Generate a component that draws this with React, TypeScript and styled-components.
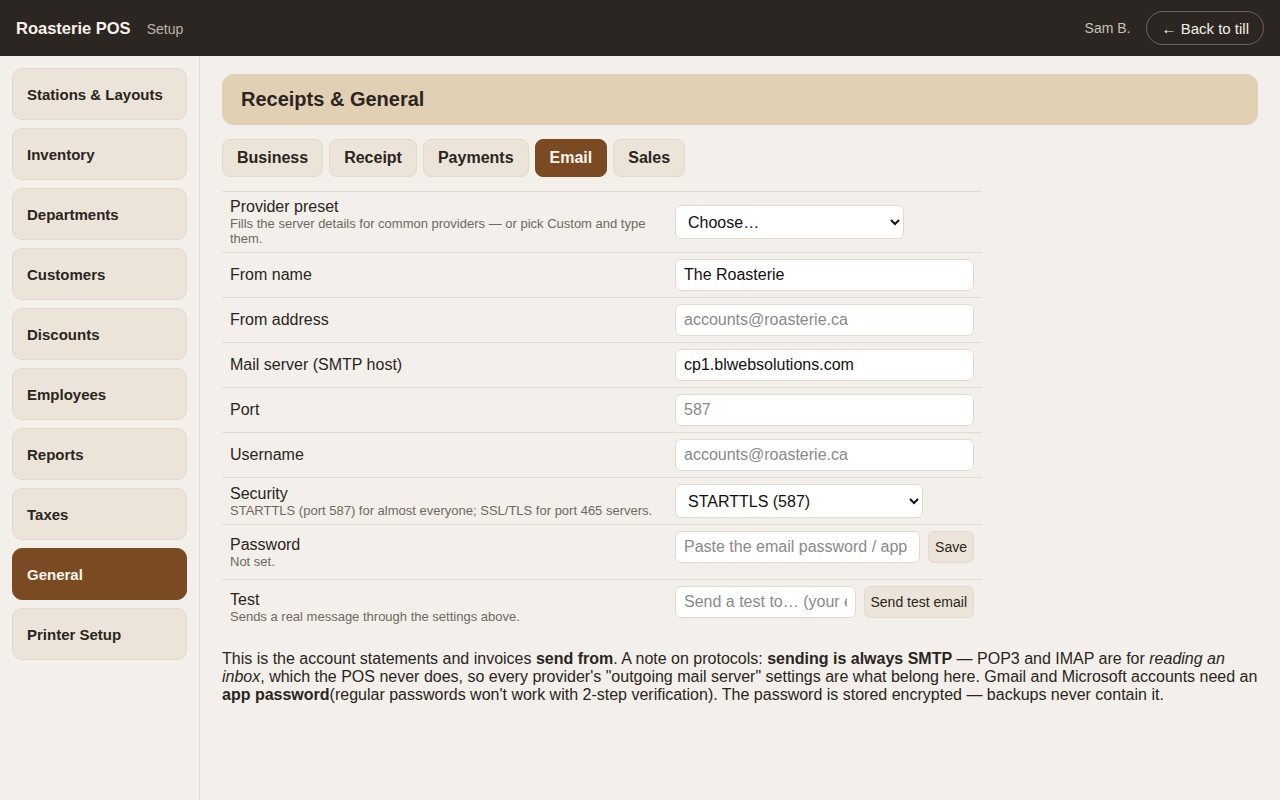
import React from "react";
import styled, { createGlobalStyle } from "styled-components";

const Global = createGlobalStyle`
  html, body { margin: 0; padding: 0; }
  body {
    font-family: "Liberation Sans", Arial, sans-serif;
    background: #f3f0eb;
    color: #2a2520;
  }
  * { box-sizing: border-box; }
`;

const Page = styled.div`
  display: flex;
  flex-direction: column;
  width: 1280px;
  height: 800px;
  overflow: hidden;
`;

const TopBar = styled.header`
  height: 56px;
  flex: none;
  background: #2b2621;
  display: flex;
  align-items: center;
  justify-content: space-between;
  padding: 0 16px;
`;

const Brand = styled.div`
  display: flex;
  align-items: baseline;
  gap: 16px;
`;

const BrandTitle = styled.span`
  color: #f6f1ea;
  font-weight: 700;
  font-size: 16.5px;
`;

const BrandSub = styled.span`
  color: #bdb4a8;
  font-size: 14px;
`;

const UserArea = styled.div`
  display: flex;
  align-items: center;
  gap: 16px;
`;

const UserName = styled.span`
  color: #c9c1b5;
  font-size: 14px;
`;

const BackButton = styled.button`
  height: 34px;
  padding: 0 14px;
  border-radius: 17px;
  border: 1px solid rgba(255, 255, 255, 0.28);
  background: transparent;
  color: #f3eee6;
  font-family: inherit;
  font-size: 15px;
`;

const Body = styled.div`
  flex: 1;
  display: flex;
  min-height: 0;
`;

const Sidebar = styled.nav`
  width: 200px;
  flex: none;
  border-right: 1px solid #e2dbd0;
  padding: 12px 12px;
  display: flex;
  flex-direction: column;
  gap: 8px;
`;

const NavItem = styled.div<{ $active?: boolean }>`
  height: 52px;
  display: flex;
  align-items: center;
  padding: 0 14px;
  border-radius: 10px;
  font-weight: 700;
  font-size: 15px;
  background: ${(p) => (p.$active ? "#7a4a22" : "#ece4d8")};
  color: ${(p) => (p.$active ? "#fbf6ef" : "#2a2520")};
  border: 1px solid ${(p) => (p.$active ? "#7a4a22" : "#e3d9cb")};
`;

const Main = styled.main`
  flex: 1;
  padding: 18px 22px;
  min-width: 0;
`;

const TitleCard = styled.div`
  height: 51px;
  background: #e2d0b5;
  border-radius: 12px;
  display: flex;
  align-items: center;
  padding: 0 19px;
  font-weight: 700;
  font-size: 20px;
  color: #2a2520;
`;

const Tabs = styled.div`
  display: flex;
  gap: 6px;
  margin-top: 14px;
  margin-bottom: 14px;
`;

const Tab = styled.div<{ $active?: boolean }>`
  height: 38px;
  display: flex;
  align-items: center;
  padding: 0 14px;
  border-radius: 8px;
  font-weight: 700;
  font-size: 16px;
  background: ${(p) => (p.$active ? "#7a4a22" : "#ece4d8")};
  color: ${(p) => (p.$active ? "#fbf6ef" : "#2a2520")};
  border: 1px solid ${(p) => (p.$active ? "#7a4a22" : "#e3d9cb")};
`;

const Table = styled.div`
  width: 760px;
`;

const Row = styled.div`
  display: grid;
  grid-template-columns: 445px 315px;
  align-items: center;
  border-top: 1px solid #e2dbd0;
`;

const LabelCell = styled.div`
  padding: 6px 8px;
`;

const Label = styled.div`
  font-size: 16px;
  line-height: 18px;
  color: #2a2520;
`;

const Hint = styled.div`
  font-size: 13px;
  line-height: 15px;
  color: #6f6860;
`;

const FieldCell = styled.div<{ $extra?: number }>`
  padding: 6px 8px ${(p) => 6 + (p.$extra || 0)}px 8px;
  display: flex;
  align-items: center;
  gap: 8px;
`;

const Input = styled.input<{ $w?: number }>`
  height: 32px;
  width: ${(p) => (p.$w ? `${p.$w}px` : "100%")};
  flex: ${(p) => (p.$w ? "none" : "1")};
  min-width: 0;
  border: 1px solid #e3dacd;
  border-radius: 6px;
  background: #fff;
  padding: 0 8px;
  font-family: inherit;
  font-size: 16px;
  color: #111;
  &::placeholder { color: #8a8a8a; }
`;

const Select = styled.select<{ $w: number }>`
  height: 34px;
  width: ${(p) => p.$w}px;
  border: 1px solid #e3dacd;
  border-radius: 6px;
  background: #fff;
  padding: 0 8px;
  font-family: inherit;
  font-size: 16px;
  color: #111;
`;

const SmallButton = styled.button`
  height: 32px;
  padding: 0 6px;
  flex: none;
  border: 1px solid #e3dacd;
  border-radius: 6px;
  background: #ece4d8;
  color: #2a2520;
  font-family: inherit;
  font-size: 14px;
`;

const Note = styled.p`
  margin: 16px 0 0;
  font-size: 16px;
  line-height: 18px;
  color: #2a2520;
`;

const nav = [
  "Stations & Layouts",
  "Inventory",
  "Departments",
  "Customers",
  "Discounts",
  "Employees",
  "Reports",
  "Taxes",
  "General",
  "Printer Setup",
];

const tabs = ["Business", "Receipt", "Payments", "Email", "Sales"];

export default function App() {
  return (
    <Page>
      <Global />
      <TopBar>
        <Brand>
          <BrandTitle>Roasterie POS</BrandTitle>
          <BrandSub>Setup</BrandSub>
        </Brand>
        <UserArea>
          <UserName>Sam B.</UserName>
          <BackButton>← Back to till</BackButton>
        </UserArea>
      </TopBar>
      <Body>
        <Sidebar>
          {nav.map((n) => (
            <NavItem key={n} $active={n === "General"}>
              {n}
            </NavItem>
          ))}
        </Sidebar>
        <Main>
          <TitleCard>Receipts &amp; General</TitleCard>
          <Tabs>
            {tabs.map((t) => (
              <Tab key={t} $active={t === "Email"}>
                {t}
              </Tab>
            ))}
          </Tabs>
          <Table>
            <Row>
              <LabelCell>
                <Label>Provider preset</Label>
                <Hint>Fills the server details for common providers — or pick Custom and type them.</Hint>
              </LabelCell>
              <FieldCell>
                <Select $w={229} defaultValue="">
                  <option value="">Choose…</option>
                  <option>Gmail</option>
                  <option>Microsoft 365</option>
                  <option>Custom</option>
                </Select>
              </FieldCell>
            </Row>
            <Row>
              <LabelCell><Label>From name</Label></LabelCell>
              <FieldCell><Input defaultValue="The Roasterie" /></FieldCell>
            </Row>
            <Row>
              <LabelCell><Label>From address</Label></LabelCell>
              <FieldCell><Input placeholder="accounts@roasterie.ca" /></FieldCell>
            </Row>
            <Row>
              <LabelCell><Label>Mail server (SMTP host)</Label></LabelCell>
              <FieldCell><Input defaultValue="cp1.blwebsolutions.com" /></FieldCell>
            </Row>
            <Row>
              <LabelCell><Label>Port</Label></LabelCell>
              <FieldCell><Input placeholder="587" /></FieldCell>
            </Row>
            <Row>
              <LabelCell><Label>Username</Label></LabelCell>
              <FieldCell><Input placeholder="accounts@roasterie.ca" /></FieldCell>
            </Row>
            <Row>
              <LabelCell>
                <Label>Security</Label>
                <Hint>STARTTLS (port 587) for almost everyone; SSL/TLS for port 465 servers.</Hint>
              </LabelCell>
              <FieldCell>
                <Select $w={248} defaultValue="starttls">
                  <option value="starttls">STARTTLS (587)</option>
                  <option value="ssl">SSL/TLS (465)</option>
                  <option value="none">None</option>
                </Select>
              </FieldCell>
            </Row>
            <Row>
              <LabelCell>
                <Label>Password</Label>
                <Hint>Not set.</Hint>
              </LabelCell>
              <FieldCell $extra={10}>
                <Input type="password" placeholder="Paste the email password / app password" />
                <SmallButton>Save</SmallButton>
              </FieldCell>
            </Row>
            <Row>
              <LabelCell>
                <Label>Test</Label>
                <Hint>Sends a real message through the settings above.</Hint>
              </LabelCell>
              <FieldCell $extra={10}>
                <Input placeholder="Send a test to… (your email)" />
                <SmallButton>Send test email</SmallButton>
              </FieldCell>
            </Row>
          </Table>
          <Note>
            This is the account statements and invoices <b>send from</b>. A note on protocols:{" "}
            <b>sending is always SMTP</b> — POP3 and IMAP are for <i>reading an inbox</i>, which the POS
            never does, so every provider's "outgoing mail server" settings are what belong here. Gmail and
            Microsoft accounts need an <b>app password</b>(regular passwords won't work with 2-step
            verification). The password is stored encrypted — backups never contain it.
          </Note>
        </Main>
      </Body>
    </Page>
  );
}
